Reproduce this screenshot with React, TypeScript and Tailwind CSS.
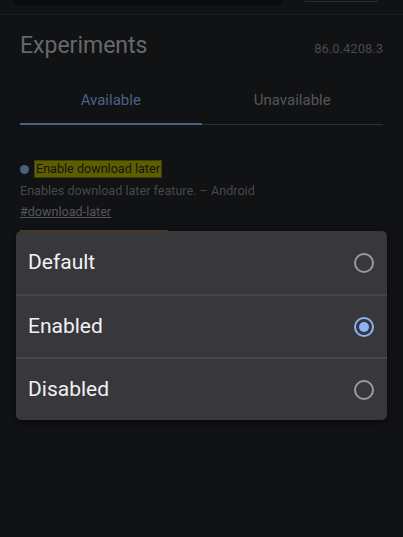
const options = ['Default', 'Enabled', 'Disabled']

export default function App() {
  const selected = 'Enabled'

  return (
    <div
      className="relative w-[403px] h-[537px] overflow-hidden bg-[#111214]"
      style={{ fontFamily: 'Roboto, "Noto Sans", sans-serif' }}
    >
      {/* Top bar (search + reset button, scrolled mostly off) */}
      <div className="h-[15px] border-b border-[#1b1c1e] flex items-start px-[13px]">
        <div className="w-[270px] h-[5px] bg-[#0a0b0c] rounded-b-[3px]" />
        <div className="ml-auto mr-[12px] w-[74px] h-[2px] border border-t-0 border-[#2a2b2e] rounded-b-[3px]" />
      </div>

      {/* Header */}
      <div className="px-5 pt-[17px] flex items-baseline justify-between">
        <h1 className="text-[23px] leading-[28px] text-[#66686c]">Experiments</h1>
        <span className="text-[13px] text-[#47494d]">86.0.4208.3</span>
      </div>

      {/* Tabs */}
      <div className="mx-5 mt-[30px] flex">
        <div className="flex-1 text-center">
          <div className="text-[15px] leading-[20px] text-[#4b6288] pb-[13px]">Available</div>
          <div className="h-[2px] bg-[#4b6288]" />
        </div>
        <div className="flex-1 text-center">
          <div className="text-[15px] leading-[20px] text-[#55575b] pb-[14px]">Unavailable</div>
          <div className="h-[1px] bg-[#2e2f32]" />
        </div>
      </div>

      {/* Experiment entry */}
      <div className="px-5 pt-[36px]">
        <div className="flex items-center gap-[6px] text-[12.6px] leading-[16px]">
          <span className="w-[9px] h-[9px] rounded-full bg-[#4a5f7e] shrink-0" />
          <span className="bg-[#5e5e00] text-[#141414] px-[1px] outline outline-[#3e3e00]">Enable download later</span>
        </div>
        <p className="mt-[5px] text-[12.6px] leading-[17px] text-[#46484b]">
          Enables download later feature. – Android
        </p>
        <p className="mt-[4px] text-[12.6px] leading-[17px] text-[#55575a] underline">#download-later</p>
      </div>

      {/* Select dialog */}
      <div className="absolute left-[16px] top-[231px] w-[371px] rounded-[5px] bg-[#38373c] shadow-[0_2px_6px_rgba(0,0,0,0.5)]">
        {/* edge of the select control behind */}
        <div className="absolute left-[4px] -top-[1px] w-[148px] h-[1px] bg-[#5a3a14]" />
        {options.map((opt, i) => (
          <div
            key={opt}
            className={`h-[63px] flex items-center justify-between pl-[12px] pr-[13px] ${
              i > 0 ? 'border-t-2 border-[#46454a]' : ''
            }`}
          >
            <span className="text-[21px] text-[#f1f1f1]">{opt}</span>
            {opt === selected ? (
              <span className="w-[20px] h-[20px] rounded-full border-2 border-[#8ab4f8] flex items-center justify-center">
                <span className="w-[10px] h-[10px] rounded-full bg-[#8ab4f8]" />
              </span>
            ) : (
              <span className="w-[20px] h-[20px] rounded-full border-2 border-[#9a9a9c]" />
            )}
          </div>
        ))}
      </div>
    </div>
  )
}
